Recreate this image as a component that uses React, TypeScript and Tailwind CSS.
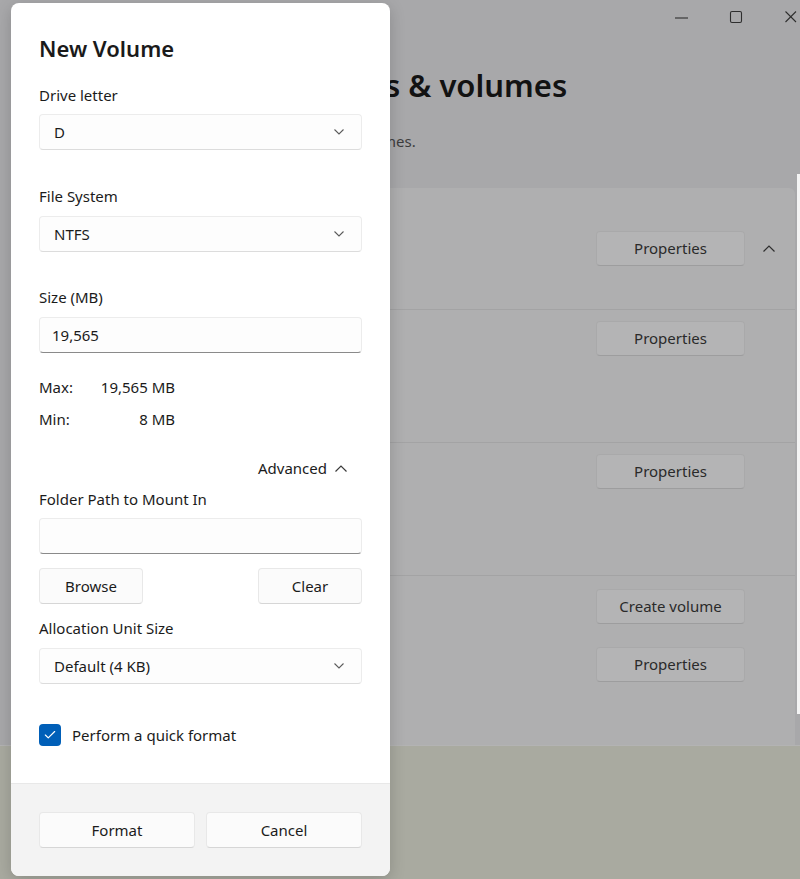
import { Check } from "lucide-react";

const font = { fontFamily: '"Noto Sans", "Open Sans", sans-serif' };

const ChevronDown = () => (
  <svg width="10" height="6" viewBox="0 0 10 6" fill="none" stroke="#5c5c5c" strokeWidth="1.1">
    <polyline points="0.5,0.5 5,5 9.5,0.5" />
  </svg>
);

const ChevronUp = ({ color = "#3a3a3a" }: { color?: string }) => (
  <svg width="12" height="7" viewBox="0 0 12 7" fill="none" stroke={color} strokeWidth="1.2">
    <polyline points="0.5,6.5 6,1 11.5,6.5" />
  </svg>
);

const Select = ({ value }: { value: string }) => (
  <div className="flex h-[36px] items-center justify-between rounded-[4px] border border-[#ececec] border-b-[#dcdcdc] bg-[#fdfdfd] pl-[14px] pr-[17px] text-[15px] text-[#1b1b1b]">
    <span>{value}</span>
    <ChevronDown />
  </div>
);

const TextBox = ({ value = "" }: { value?: string }) => (
  <div className="flex h-[36px] items-center rounded-[4px] border border-[#ececec] border-b-[#8a8a8a] bg-[#fdfdfd] pl-[12px] text-[15px] text-[#1b1b1b]">
    {value}
  </div>
);

const Button = ({ label, className = "" }: { label: string; className?: string }) => (
  <button
    className={`flex h-[36px] items-center justify-center rounded-[4px] border border-[#e8e8e8] border-b-[#d6d6d6] bg-[#fbfbfb] text-[15px] text-[#1b1b1b] ${className}`}
  >
    {label}
  </button>
);

const Label = ({ children }: { children: string }) => (
  <div className="h-[20px] text-[15px] leading-[20px] text-[#1b1b1b]">{children}</div>
);

// dimmed button in the window behind the dialog
const BackButton = ({ label }: { label: string }) => (
  <div className="flex h-[35px] w-[149px] items-center justify-center rounded-[4px] border border-[#a9a9aa] border-b-[#9d9d9e] bg-[#b4b4b5] text-[15px] text-[#2a2a2a]">
    {label}
  </div>
);

function SettingsWindow() {
  return (
    <div className="flex h-full flex-col">
      <div className="flex h-[745px] flex-col bg-[#a8a8aa]">
        {/* caption buttons */}
        <div className="flex h-[34px] items-center justify-end gap-[40px] pr-[1px]">
          <svg width="15" height="15" viewBox="0 0 15 15" stroke="#2e2e2e" strokeWidth="1.1">
            <line x1="1" y1="8" x2="14" y2="8" />
          </svg>
          <svg width="15" height="15" viewBox="0 0 15 15" fill="none" stroke="#2e2e2e" strokeWidth="1.1">
            <rect x="1.5" y="1.5" width="11" height="11" rx="1.5" />
          </svg>
          <svg width="15" height="15" viewBox="0 0 15 15" stroke="#2e2e2e" strokeWidth="1.1">
            <line x1="1.5" y1="1.5" x2="12" y2="12" />
            <line x1="12" y1="1.5" x2="1.5" y2="12" />
          </svg>
        </div>

        <div className="pl-[320px]">
          <h1 className="mt-[30px] h-[43px] text-[31px] font-semibold leading-[43px] text-[#121212]">
            Disks &amp; volumes
          </h1>
          <p className="mt-[23px] pl-[11px] text-[15px] text-[#3d3d3e]">All volumes.</p>
        </div>

        <div className="mt-[35px] flex flex-1">
          <div className="ml-[340px] flex flex-1 flex-col rounded-t-[6px] bg-[#afafb0]">
            <div className="flex h-[122px] items-center border-b border-[#a3a3a4] pl-[256px]">
              <BackButton label="Properties" />
              <span className="ml-[18px]">
                <ChevronUp color="#2e2e2e" />
              </span>
            </div>
            <div className="h-[133px] border-b border-[#a3a3a4] pl-[256px] pt-[11px]">
              <BackButton label="Properties" />
            </div>
            <div className="h-[133px] border-b border-[#a3a3a4] pl-[256px] pt-[11px]">
              <BackButton label="Properties" />
            </div>
            <div className="flex flex-col gap-[23px] pl-[256px] pt-[13px]">
              <BackButton label="Create volume" />
              <BackButton label="Properties" />
            </div>
          </div>
          <div className="ml-[2px] mt-[-14px] h-[540px] w-[3px] bg-[#f4f4f4]" />
        </div>
      </div>
      <div className="flex-1 border-t border-[#b3b3b3] bg-[#a9aaa0]" />
    </div>
  );
}

export default function App() {
  return (
    <div className="relative h-[879px] w-[800px] overflow-hidden bg-[#a8a8aa]" style={font}>
      <SettingsWindow />

      {/* modal dialog */}
      <div className="absolute left-[11px] top-[3px] flex h-[873px] w-[379px] flex-col overflow-hidden rounded-[8px] bg-white shadow-[0_4px_16px_rgba(0,0,0,0.18)]">
        <div className="flex flex-1 flex-col px-[28px] pt-[31px]">
          <h2 className="h-[28px] text-[22px] font-semibold leading-[28px] text-[#1a1a1a]">New Volume</h2>

          <div className="mt-[23px]">
            <Label>Drive letter</Label>
          </div>
          <div className="mt-[9px]">
            <Select value="D" />
          </div>

          <div className="mt-[36px]">
            <Label>File System</Label>
          </div>
          <div className="mt-[10px]">
            <Select value="NTFS" />
          </div>

          <div className="mt-[35px]">
            <Label>Size (MB)</Label>
          </div>
          <div className="mt-[10px]">
            <TextBox value="19,565" />
          </div>

          <div className="mt-[24px] grid w-[136px] grid-cols-[60px_76px] gap-y-[12px] text-[15px] leading-[20px] text-[#1b1b1b]">
            <span>Max:</span>
            <span className="text-right">19,565 MB</span>
            <span>Min:</span>
            <span className="text-right">8 MB</span>
          </div>

          <div className="mt-[29px] flex h-[20px] items-center justify-end gap-[8px] pr-[15px] text-[15px] text-[#1b1b1b]">
            <span>Advanced</span>
            <ChevronUp />
          </div>

          <div className="mt-[11px]">
            <Label>Folder Path to Mount In</Label>
          </div>
          <div className="mt-[9px]">
            <TextBox />
          </div>

          <div className="mt-[14px] flex justify-between">
            <Button label="Browse" className="h-[35px] w-[104px]" />
            <Button label="Clear" className="h-[35px] w-[104px]" />
          </div>

          <div className="mt-[14px]">
            <Label>Allocation Unit Size</Label>
          </div>
          <div className="mt-[10px]">
            <Select value="Default (4 KB)" />
          </div>

          <label className="mt-[40px] flex items-center gap-[11px] text-[15px] text-[#1b1b1b]">
            <span className="flex h-[22px] w-[22px] items-center justify-center rounded-[4px] bg-[#005fb8]">
              <Check className="h-[14px] w-[14px] text-white" strokeWidth={2} />
            </span>
            Perform a quick format
          </label>
        </div>

        <div className="flex h-[93px] gap-[11px] border-t border-[#e8e8e8] bg-[#f3f3f3] px-[28px] pt-[28px]">
          <Button label="Format" className="flex-1" />
          <Button label="Cancel" className="flex-1" />
        </div>
      </div>
    </div>
  );
}
